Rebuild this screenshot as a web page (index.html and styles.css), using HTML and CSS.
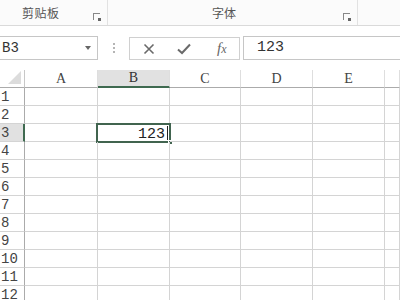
FILE: index.html
```html
<!DOCTYPE html>
<html>
<head>
<meta charset="utf-8">
<link rel="stylesheet" href="styles.css">
</head>
<body>
<div class="ribbon">
  <div class="group g1"><span class="glabel">剪贴板</span><span class="launcher"></span></div>
  <div class="group g2"><span class="glabel">字体</span><span class="launcher"></span></div>
  <div class="group g3"></div>
</div>
<div class="fbar">
  <div class="namebox"><span class="nb-text">B3</span><span class="nb-arrow"></span></div>
  <div class="dots"><i></i><i></i><i></i></div>
  <div class="btns">
    <svg class="ico-x" width="12" height="12" viewBox="0 0 12 12"><path d="M1.5 1.5L10.5 10.5M10.5 1.5L1.5 10.5" stroke="#6a6a6a" stroke-width="1.6" fill="none"/></svg>
    <svg class="ico-check" width="14" height="12" viewBox="0 0 14 12"><path d="M1 6.5L5 10L13 1.5" stroke="#6a6a6a" stroke-width="2" fill="none"/></svg>
    <span class="fx">f<sub>x</sub></span>
  </div>
  <div class="finput">123</div>
</div>
<div class="sheet">
  <div class="corner"><span class="tri"></span></div>
  <div class="ch">A</div><div class="ch sel">B</div><div class="ch">C</div><div class="ch">D</div><div class="ch">E</div><div class="ch"></div>

  <div class="rh">1</div><div class="c"></div><div class="c"></div><div class="c"></div><div class="c"></div><div class="c"></div><div class="c"></div>
  <div class="rh">2</div><div class="c"></div><div class="c"></div><div class="c"></div><div class="c"></div><div class="c"></div><div class="c"></div>
  <div class="rh sel">3</div><div class="c"></div><div class="c active"><span class="val">123</span><span class="caret"></span><span class="selbox"></span><span class="handle"></span></div><div class="c"></div><div class="c"></div><div class="c"></div><div class="c"></div>
  <div class="rh">4</div><div class="c"></div><div class="c"></div><div class="c"></div><div class="c"></div><div class="c"></div><div class="c"></div>
  <div class="rh">5</div><div class="c"></div><div class="c"></div><div class="c"></div><div class="c"></div><div class="c"></div><div class="c"></div>
  <div class="rh">6</div><div class="c"></div><div class="c"></div><div class="c"></div><div class="c"></div><div class="c"></div><div class="c"></div>
  <div class="rh">7</div><div class="c"></div><div class="c"></div><div class="c"></div><div class="c"></div><div class="c"></div><div class="c"></div>
  <div class="rh">8</div><div class="c"></div><div class="c"></div><div class="c"></div><div class="c"></div><div class="c"></div><div class="c"></div>
  <div class="rh">9</div><div class="c"></div><div class="c"></div><div class="c"></div><div class="c"></div><div class="c"></div><div class="c"></div>
  <div class="rh">10</div><div class="c"></div><div class="c"></div><div class="c"></div><div class="c"></div><div class="c"></div><div class="c"></div>
  <div class="rh">11</div><div class="c"></div><div class="c"></div><div class="c"></div><div class="c"></div><div class="c"></div><div class="c"></div>
  <div class="rh">12</div><div class="c"></div><div class="c"></div><div class="c"></div><div class="c"></div><div class="c"></div><div class="c"></div>
</div>
</body>
</html>
```
FILE: styles.css
```css
* { box-sizing: border-box; }
html, body { margin: 0; padding: 0; background: #fff; overflow: hidden; }
body { width: 400px; height: 300px; font-family: "Liberation Serif", "Noto Sans CJK SC", serif; color: #333; }

.ribbon {
  height: 26px;
  display: flex;
  background: #fbfbfb;
  border-bottom: 1px solid #dadada;
}
.group { position: relative; height: 25px; border-right: 1px solid #e2e2e2; display: flex; align-items: center; }
.g1 { width: 108px; }
.g2 { width: 250px; }
.g3 { flex: 1; border-right: none; }
.glabel { font-family: "Noto Sans CJK SC", sans-serif; font-size: 12px; color: #555; line-height: 14px; }
.g1 .glabel { margin-left: 22px; letter-spacing: 0.5px; }
.g2 .glabel { margin-left: 104px; }
.launcher {
  position: absolute; right: 7px; top: 13px;
  width: 7px; height: 7px;
  border-left: 1px solid #888; border-top: 1px solid #888;
}
.launcher::after {
  content: ""; position: absolute; right: -1px; bottom: -1px; width: 3px; height: 3px; background: #666;
}

.fbar { display: flex; align-items: flex-start; margin-top: 10px; height: 34px; }
.namebox {
  width: 98px; height: 24px;
  border: 1px solid #c6c6c6; border-left: none;
  display: flex; align-items: center; justify-content: space-between;
  background: #fff;
}
.nb-text { font-family: "Liberation Mono", monospace; font-size: 14px; color: #333; margin-left: 2px; }
.nb-arrow { width: 0; height: 0; border-left: 3.5px solid transparent; border-right: 3.5px solid transparent; border-top: 4px solid #666; margin-right: 6px; }
.dots { width: 31px; height: 24px; display: flex; flex-direction: column; align-items: center; justify-content: center; gap: 2px; }
.dots i { display: block; width: 2px; height: 2px; background: #b5b5b5; }
.btns {
  width: 111px; height: 23px; margin-top: 1px;
  border: 1px solid #d0d0d0;
  display: flex; align-items: center;
  background: #fff;
}
.ico-x { margin-left: 13px; }
.ico-check { margin-left: 22px; }
.fx { font-family: "Liberation Serif", serif; font-style: italic; font-size: 15px; color: #666; margin-left: 26px; }
.fx sub { font-size: 12px; vertical-align: 0; }
.finput {
  flex: 1; height: 24px; margin-left: 3px;
  border: 1px solid #c6c6c6; border-right: none;
  font-family: "Liberation Mono", monospace; font-size: 15px; color: #333;
  padding-left: 13px; line-height: 22px;
}

.sheet {
  display: grid;
  grid-template-columns: 25px 73px 72px 71px 72px 72px 15px;
  grid-auto-rows: 18px;
}
.sheet > div { border-right: 1px solid #d4d4d4; border-bottom: 1px solid #d4d4d4; }
.corner { position: relative; border-right: 1px solid #c8c8c8 !important; border-bottom: 1px solid #ababab !important; }
.tri {
  position: absolute; right: 3px; bottom: 3px; width: 0; height: 0;
  border-left: 13px solid transparent; border-bottom: 13px solid #dcdcdc;
}
.ch {
  font-family: "Liberation Serif", serif; font-size: 14px; color: #444;
  text-align: center; line-height: 17px;
  border-bottom: 1px solid #ababab !important;
  border-right-color: #dedede !important;
}
.ch.sel { background: #e1e1e1; border-bottom: 2px solid #3f6a50 !important; color: #333; line-height: 16px; }
.rh {
  font-family: "Liberation Mono", monospace; font-size: 14px; color: #444;
  line-height: 18px; padding-left: 1px;
  border-right: 1px solid #ababab !important;
}
.rh.sel { background: #e1e1e1; border-right: 2px solid #3f6a50 !important; color: #444; }
.c { position: relative; }
.active { text-align: right; }
.val { font-family: "Liberation Mono", monospace; font-size: 15px; color: #222; line-height: 18px; margin-right: 4px; }
.caret { position: absolute; right: 1px; top: 2px; width: 1px; height: 14px; background: #222; }
.selbox { position: absolute; left: -2px; top: -1px; right: -2px; bottom: -2px; border: 2px solid #41644f; }
.handle { position: absolute; right: -4px; bottom: -4px; width: 5px; height: 5px; background: #41644f; border: 1px solid #fff; }
```
